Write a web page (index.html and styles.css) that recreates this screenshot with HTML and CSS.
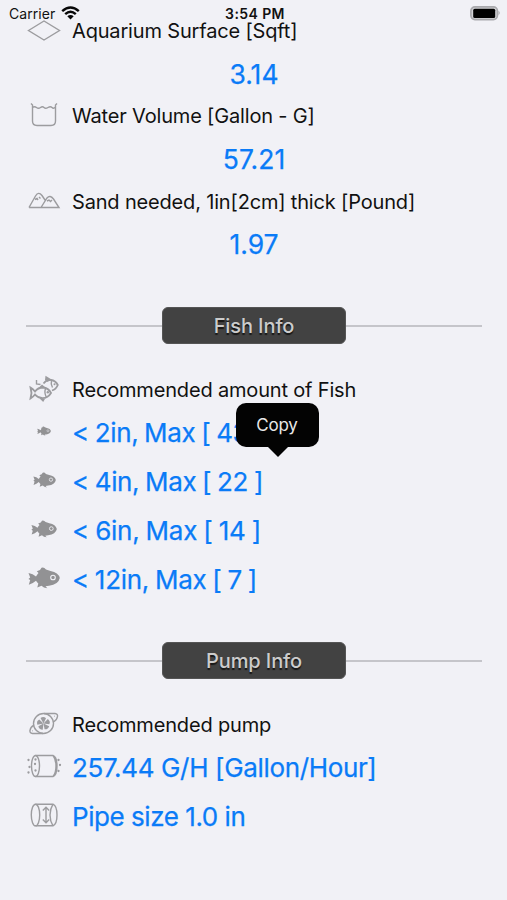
FILE: index.html
```html
<!DOCTYPE html>
<html lang="en">
<head>
<meta charset="utf-8">
<title>Aquarium Calculator</title>
<link rel="stylesheet" href="styles.css">
</head>
<body>
<svg class="defs" width="0" height="0">
  <symbol id="fish" viewBox="0 0 32 22">
    <path fill="#929294" d="M.5 6Q5 6.500 8 9.500Q9 7.500 10.500 6L8.800 4.300L12 3L13.500 .8Q16 0 18 2.500L22.500 4Q30.500 5.500 31.800 11Q30.500 17.500 21 18.800L17.500 19.200L19.300 21.300Q15.500 21 13.500 18.800L9.300 20.500L10.300 16.500Q9 15.500 8 13.800Q5 16.500 .8 17.800L2.200 13L.5 12L2.200 10.500Z"/>
    <circle cx="25" cy="10.500" r="2.300" fill="#929294" stroke="#f1f1f6" stroke-width="1.100"/>
  </symbol>
</svg>
<header class="status">
  <div class="carrier"><span>Carrier</span>
    <svg width="19" height="14" viewBox="0 0 19 14" fill="none" stroke="#080808" stroke-width="2.400">
      <path d="M1.200 5.200Q9.500-2.400 17.800 5.200"/><path d="M4.200 8.200Q9.500 3.300 14.800 8.200"/><path d="M9.500 13.500L6.300 10.300Q9.500 7.600 12.700 10.300Z" fill="#080808" stroke="none"/>
    </svg>
  </div>
  <div class="clock">3:54 PM</div>
  <svg class="battery" width="31" height="15" viewBox="0 0 31 15"><rect x=".9" y=".9" width="26.500" height="12.700" rx="4" fill="#d3d3d6" stroke="#a9a9ad" stroke-width="1.700"/><rect x="3.200" y="2.700" width="22" height="9.200" rx="1.500" fill="#000"/><path d="M28.500 4.800Q31 7 28.500 9.300Z" fill="#a9a9ad"/></svg>
</header>
<main>
  <section>
    <div class="row label"><span class="icon"><svg width="34" height="22" viewBox="0 0 34 22"><path d="M1.500 10.500L17 1L32.500 10.500L17 20Z"/></svg></span><span>Aquarium Surface [Sqft]</span></div>
    <div class="value">3.14</div>
    <div class="row label"><span class="icon up"><svg width="28" height="25" viewBox="0 0 28 25"><path d="M1 1.500L2.500 3V19Q2.500 23.500 7 23.500H21Q25.500 23.500 25.500 19V3L27 1.500M2.500 5.500Q4.500 4 6.500 5.500T10.500 5.500T14 5.500T18 5.500T22 5.500T25.500 5"/></svg></span><span>Water Volume [Gallon - G]</span></div>
    <div class="value">57.21</div>
    <div class="row label"><span class="icon up"><svg width="32" height="17" viewBox="0 0 32 17"><path d="M1 15.500H31L25.500 7Q22 2.500 19 6L13 15.500M1 15.500L7.500 4Q10.500-1 14 3.500L17 8M7 7.500L9 6.500L10 8M11 5L12.500 6.500M19 9L21 8L22.500 9.500L24 8"/></svg></span><span>Sand needed, 1in[2cm] thick [Pound]</span></div>
    <div class="value">1.97</div>
  </section>
  <h2 class="divider"><span>Fish Info</span></h2>
  <section>
    <div class="row label"><span class="icon up"><svg width="30" height="27" viewBox="0 0 30 27"><g class="bold"><path d="M1.500 12.500Q4 14 6 16.500Q9 12.500 14 12.500Q19.500 13 22 18Q19 23 13.500 23.200Q9 23 6 19.500Q4 22 1.500 23.500L2.500 18ZM11 22.500L14 25.500L15.500 23"/><path d="M14.500 8.500Q17.500 4.500 22 5Q26.500 5.500 28.800 10Q27 14.500 23 15.500"/></g><path class="blade" d="M9.500 13L13 9.500L16.500 12.500ZM16 5L16.500 .8L23 4.800L18 7Z"/><path d="M16.500 13.500Q15 18 17.500 22.500M22.500 6Q21.500 9 23.500 12.500M7.500 5V9L11.500 9.500"/><circle class="blade" cx="18.800" cy="17.300" r="1.200"/><circle class="blade" cx="25.500" cy="9.200" r="1"/></svg></span><span>Recommended amount of Fish</span></div>
    <div class="row result r1"><span class="icon up"><svg width="14" height="10"><use href="#fish"/></svg></span><span>&lt; 2in, Max [ 43 ]</span>
      <div class="popover"><span>Copy</span></div></div>
    <div class="row result r2"><span class="icon up"><svg width="23" height="16"><use href="#fish"/></svg></span><span>&lt; 4in, Max [ 22 ]</span></div>
    <div class="row result r3"><span class="icon up"><svg width="26" height="18"><use href="#fish"/></svg></span><span>&lt; 6in, Max [ 14 ]</span></div>
    <div class="row result r4"><span class="icon up"><svg width="32" height="22"><use href="#fish"/></svg></span><span>&lt; 12in, Max [ 7 ]</span></div>
  </section>
  <h2 class="divider"><span>Pump Info</span></h2>
  <section>
    <div class="row label"><span class="icon up"><svg width="30" height="24" viewBox="0 0 30 24"><circle cx="14.500" cy="11.500" r="10"/><path d="M15 1.500H26Q29 2 28.500 4.500Q28 8 24.500 10M14 21.500H3.500Q.5 21 1 18.500Q1.500 15 4.500 13.500M25.500 4.200H26M3.500 18.800H4"/><g class="blade"><path id="b" d="M14.500 11.500L11.500 6Q14.500 3.800 17 6.200Z"/><use href="#b" transform="rotate(72 14.500 11.500)"/><use href="#b" transform="rotate(144 14.500 11.500)"/><use href="#b" transform="rotate(216 14.500 11.500)"/><use href="#b" transform="rotate(288 14.500 11.500)"/></g></svg></span><span>Recommended pump</span></div>
    <div class="row result r5"><span class="icon up"><svg width="34" height="24" viewBox="0 0 34 24"><ellipse cx="8.500" cy="12" rx="4" ry="10.500"/><path d="M8.500 1.500H26Q30 3 30 12T26 22.500H8.500M26 1.500Q29 5 29 12T26 22.500"/><path class="dots" d="M1.500 6h.01M2.500 13h.01M1.500 18.500h.01M8.500 5.500h.01M8 10h.01M8.500 16.500h.01M31.500 6h.01M33 11h.01M31.500 17h.01"/></svg></span><span>257.44 G/H [Gallon/Hour]</span></div>
    <div class="row result r6"><span class="icon up"><svg width="28" height="24" viewBox="0 0 28 24"><ellipse cx="5.500" cy="12" rx="4.200" ry="10.800"/><path d="M5.500 1.200H23Q27 3 27 12T23 22.800H5.500M23 1.200Q20 6 20 12T23 22.800"/><path d="M16 4.500V19.500M12.800 7.500L16 4.200L19.200 7.500M12.800 16.500L16 19.800L19.200 16.500"/></svg></span><span>Pipe size 1.0 in</span></div>
  </section>
</main>
</body>
</html>
```
FILE: styles.css
```css
* { box-sizing: border-box; }
body { margin: 0; height: 900px; overflow: hidden; position: relative; background: #f1f1f6; color: #111; font-family: Inter, "Liberation Sans", sans-serif; }
.defs { position: absolute; }
.status { position: absolute; z-index: 2; inset: 0 0 auto; height: 27px; padding: 0 6px 0 9px; display: grid; grid-template-columns: 1fr auto 1fr; align-items: center; font-size: 14px; }
.carrier { display: flex; gap: 6px; align-items: center; letter-spacing: .05px; }
.carrier svg { margin-top: -2px; }
.clock { font-weight: 600; letter-spacing: .4px; }
.battery { justify-self: end; margin-top: -1px; }
main { padding: 13px 25px 0 26px; }
.row { display: flex; align-items: center; position: relative; white-space: nowrap; }
.label { height: 36px; font-size: 20px; letter-spacing: -.17px; }
.icon { width: 36px; margin-right: 10px; display: flex; justify-content: center; flex: none; }
.up svg { position: relative; top: -1.5px; }
.icon svg { overflow: visible; fill: none; stroke: #9c9c9f; stroke-width: 1.4; }
.icon use { stroke: none; }
.bold { stroke-width: 1.8; }
.icon .dots { stroke-width: 2.3; stroke-linecap: round; }
.icon .blade { fill: #9c9c9f; stroke: none; }
.value { height: 49.3px; display: flex; align-items: center; justify-content: center; font-size: 26.5px; color: #0a7bf7; -webkit-text-stroke: .25px; }
.result { height: 48.8px; font-size: 26px; color: #0a7bf7; -webkit-text-stroke: .25px; }
.r1, .r2 { letter-spacing: -.36px; word-spacing: -1.1px; }
.r3 { letter-spacing: -.24px; word-spacing: -.9px; }
.r4 { letter-spacing: -.28px; word-spacing: -1.1px; }
.r5 { letter-spacing: -.35px; }
.r6 { letter-spacing: -.45px; }
.divider { display: flex; align-items: center; height: 37px; margin: 38.5px 0 28px; font-size: 20px; font-weight: 500; color: #ccc; letter-spacing: -.1px; }
.divider::before, .divider::after { content: ""; flex: 1; height: 2px; background: #c5c5ca; }
.divider span { width: 184px; height: 37px; border-radius: 6px; background: #424242; border: 1px solid #555; display: flex; align-items: center; justify-content: center; text-shadow: 0 2px 1px #161616; }
.popover { position: absolute; z-index: 3; left: 209.5px; top: -5.5px; width: 83px; height: 44px; border-radius: 10px; background: #030303; color: #e8e8e8; font-size: 17px; letter-spacing: -.2px; word-spacing: 0; -webkit-text-stroke: 0; display: flex; align-items: center; justify-content: center; }
.popover::after { content: ""; position: absolute; top: 43px; left: 31px; border: 11px solid transparent; border-top-color: #030303; border-bottom: 0; }
```
